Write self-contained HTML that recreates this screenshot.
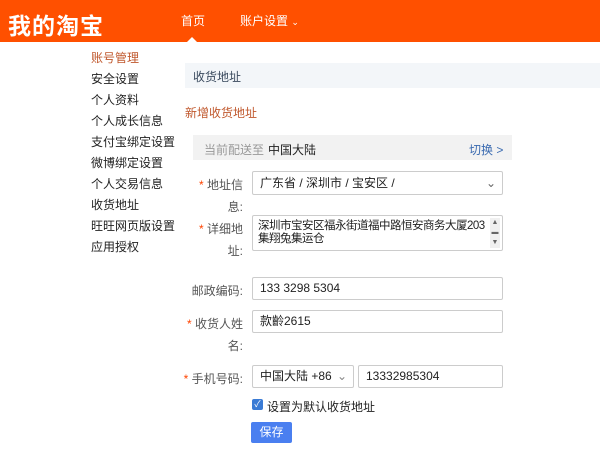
<!DOCTYPE html><html><head><meta charset="utf-8"><style>
body{margin:0;width:600px;height:453px;overflow:hidden;background:#fff;font-family:"Liberation Sans","Noto Sans CJK SC",sans-serif;font-size:12px;color:#333;position:relative}
.a{position:absolute;white-space:nowrap}
.hd{position:absolute;left:0;top:0;width:600px;height:42px;background:#ff5000}
.in{position:absolute;border:1px solid #ccc;border-radius:2px;background:#fff;box-sizing:border-box;font-size:12px;color:#222;padding-left:7px}
.lb{position:absolute;right:357px;text-align:right;color:#555;white-space:nowrap}
.st{color:#f40}
</style></head><body>
<div class="hd"></div>
<div class="a" style="left:8px;top:7px;font-size:23px;font-weight:bold;color:#fff;letter-spacing:1px">我的淘宝</div>
<div class="a" style="left:181px;top:12px;color:#fff;font-size:12px">首页</div>
<div class="a" style="left:240px;top:12px;color:#fff;font-size:12px">账户设置 <span style="font-size:9px">⌄</span></div>
<div class="a" style="left:187px;top:37px;width:0;height:0;border-left:5px solid transparent;border-right:5px solid transparent;border-bottom:5px solid #fff"></div>
<div class="a" style="left:91px;top:48px;line-height:21px;font-size:12px;color:#222">
<div style="color:#c0582d">账号管理</div><div>安全设置</div><div>个人资料</div><div>个人成长信息</div><div>支付宝绑定设置</div><div>微博绑定设置</div><div>个人交易信息</div><div>收货地址</div><div>旺旺网页版设置</div><div>应用授权</div></div>
<div class="a" style="left:185px;top:63px;width:415px;height:25px;background:#f3f6f9"></div>
<div class="a" style="left:193px;top:68px;color:#3a4a5e">收货地址</div>
<div class="a" style="left:185px;top:104px;color:#c0582d">新增收货地址</div>
<div class="a" style="left:193px;top:135px;width:319px;height:25px;background:#f2f2f2"></div>
<div class="a" style="left:204px;top:141px;color:#999">当前配送至</div>
<div class="a" style="left:268px;top:141px;color:#222">中国大陆</div>
<div class="a" style="left:469px;top:141px;color:#3a6ab0">切换 &gt;</div>
<div class="lb" style="top:176px"><span class="st">* </span>地址信</div>
<div class="lb" style="top:198px">息:</div>
<div class="in" style="left:252px;top:171px;width:251px;height:24px;line-height:22px">广东省 / 深圳市 / 宝安区 /<span style="position:absolute;right:6px;color:#666">⌄</span></div>
<div class="lb" style="top:220px"><span class="st">* </span>详细地</div>
<div class="lb" style="top:242px">址:</div>
<div class="in" style="left:252px;top:215px;width:251px;height:36px;line-height:13px;padding-top:4px;white-space:nowrap;font-size:11.5px;letter-spacing:-0.5px;padding-left:5px">深圳市宝安区福永街道福中路恒安商务大厦203<br>集翔兔集运仓<span style="position:absolute;right:2px;top:2px;width:10px;height:30px;background:#f0f0f0;font-size:7px;color:#666;text-align:center;line-height:10px;letter-spacing:0">▲<br>▬<br>▼</span></div>
<div class="lb" style="top:282px">邮政编码:</div>
<div class="in" style="left:252px;top:277px;width:251px;height:23px;line-height:21px">133 3298 5304</div>
<div class="lb" style="top:315px"><span class="st">* </span>收货人姓</div>
<div class="lb" style="top:337px">名:</div>
<div class="in" style="left:252px;top:310px;width:251px;height:23px;line-height:21px">款齡2615</div>
<div class="lb" style="top:370px"><span class="st">* </span>手机号码:</div>
<div class="in" style="left:252px;top:365px;width:102px;height:23px;line-height:21px">中国大陆 +86<span style="position:absolute;right:6px;color:#888">⌄</span></div>
<div class="in" style="left:358px;top:365px;width:145px;height:23px;line-height:21px">13332985304</div>
<div class="a" style="left:252px;top:399px;width:11px;height:11px;background:#3a7bd5;border-radius:2px;color:#fff;font-size:9px;line-height:11px;text-align:center">✓</div>
<div class="a" style="left:267px;top:398px;color:#222">设置为默认收货地址</div>
<div class="a" style="left:251px;top:422px;width:41px;height:21px;background:#4a7ff0;border-radius:2px;color:#fff;text-align:center;line-height:21px">保存</div>
</body></html>
